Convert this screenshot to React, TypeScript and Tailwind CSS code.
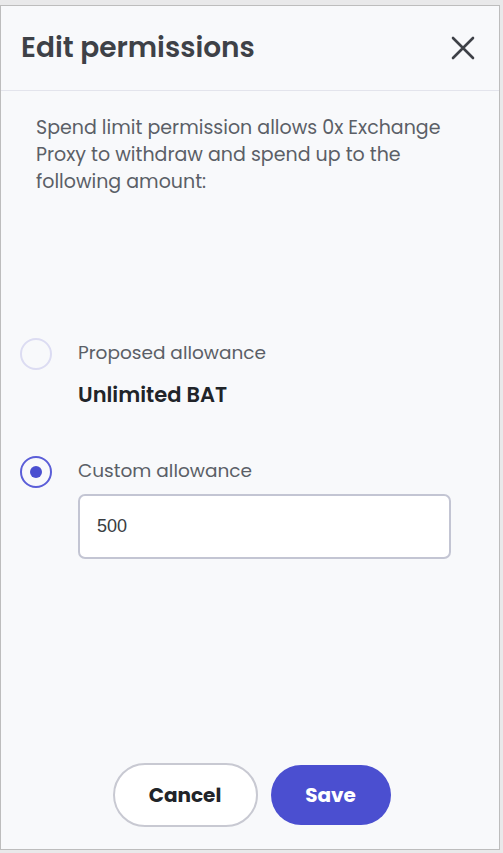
import React from 'react';

const font = { fontFamily: 'Poppins, "Open Sans", "Noto Sans", sans-serif' };

function Radio({ checked }: { checked: boolean }) {
  return (
    <div
      className={`w-[32px] h-[32px] rounded-full border-2 flex items-center justify-center shrink-0 ${
        checked ? 'border-[#5b5ed8]' : 'border-[#dcdcf2]'
      }`}
    >
      {checked && <div className="w-[12px] h-[12px] rounded-full bg-[#4a4fd0]" />}
    </div>
  );
}

export default function App() {
  return (
    <div className="w-[503px] h-[853px] bg-[#e9e9ea] pt-[5px] overflow-hidden" style={font}>
      <div className="w-[500px] h-[845px] bg-[#f8f9fb] border border-[#bdbdbd] flex flex-col">
        {/* Header */}
        <div className="h-[85px] flex items-center justify-between pl-[20px] pr-[22px] border-b border-[#e3e4ec]">
          <h1 className="text-[28px] font-semibold text-[#3e4147]">Edit permissions</h1>
          <svg width="28" height="28" viewBox="0 0 28 28" fill="none">
            <path d="M4 4L24 24M24 4L4 24" stroke="#3e4147" strokeWidth="2.6" strokeLinecap="round" />
          </svg>
        </div>

        <p className="mt-[23px] pl-[35px] pr-[40px] text-[19px] leading-[27px] text-[#5b5f67]">
          Spend limit permission allows 0x Exchange Proxy to withdraw and spend up to the following amount:
        </p>

        {/* Options */}
        <div className="mt-[143px] pl-[19px] pr-[48px]">
          <div className="flex items-start gap-[26px]">
            <Radio checked={false} />
            <div className="-mt-[1px]">
              <div className="text-[18.5px] leading-[32px] text-[#5b5f67]">Proposed allowance</div>
              <div className="mt-[10px] text-[21px] font-semibold text-[#212429]">Unlimited BAT</div>
            </div>
          </div>

          <div className="mt-[45px] flex items-start gap-[26px]">
            <Radio checked />
            <div className="-mt-[1px] flex-1">
              <div className="text-[18.5px] leading-[32px] text-[#5b5f67]">Custom allowance</div>
              <div className="mt-[7px] h-[65px] bg-white border-2 border-[#c3c5d3] rounded-[7px] flex items-center px-[17px]">
                <span className="text-[18px] text-[#3a3d42]" style={{ fontFamily: '"Liberation Sans", Arial, sans-serif' }}>
                  500
                </span>
              </div>
            </div>
          </div>
        </div>

        {/* Actions */}
        <div className="mt-auto mb-[22px] flex justify-center gap-[13px] pl-[3px]">
          <button className="w-[145px] h-[64px] rounded-full bg-white border-2 border-[#c8c9d2] text-[20px] font-bold text-[#212429]">
            Cancel
          </button>
          <button className="w-[120px] h-[60px] mt-[2px] rounded-full bg-[#4b4fd0] text-[20px] font-bold text-white">
            Save
          </button>
        </div>
      </div>
    </div>
  );
}
